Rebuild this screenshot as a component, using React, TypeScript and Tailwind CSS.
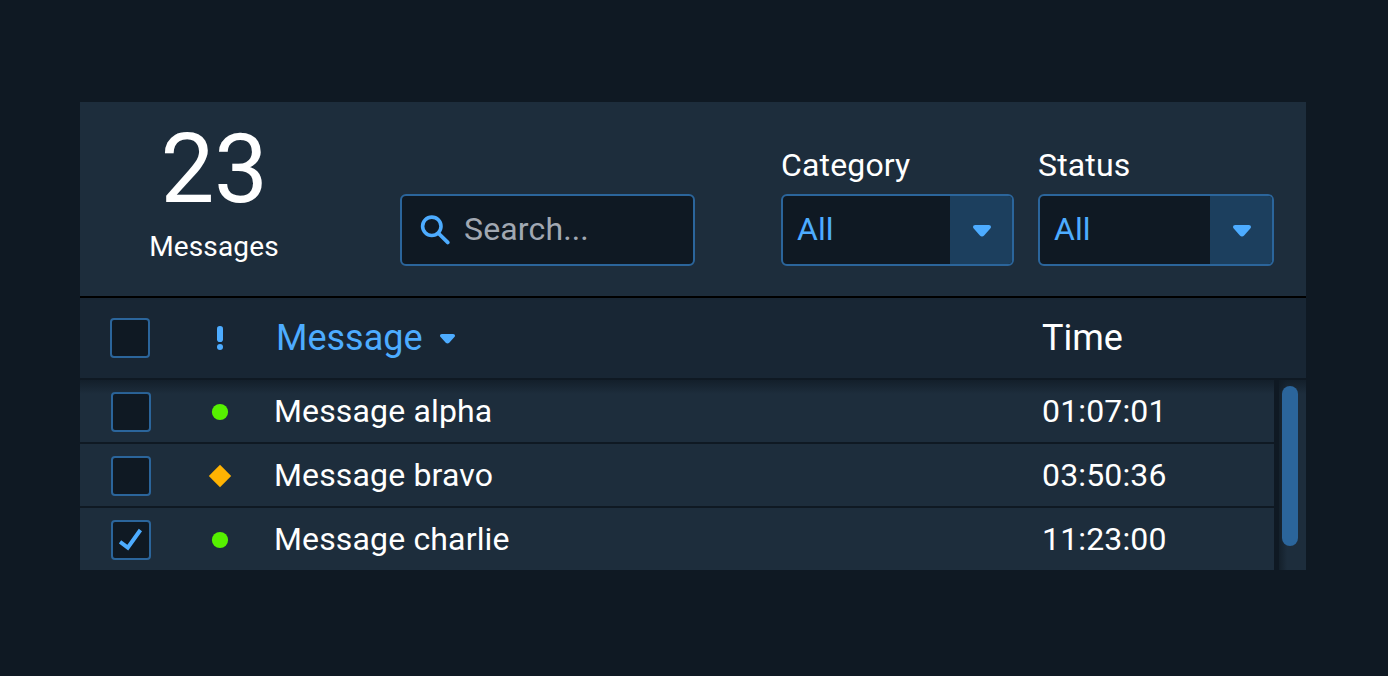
const messages = [
  { name: 'Message alpha', time: '01:07:01', status: 'normal', checked: false },
  { name: 'Message bravo', time: '03:50:36', status: 'caution', checked: false },
  { name: 'Message charlie', time: '11:23:00', status: 'normal', checked: true },
];

function Caret({ className }: { className: string }) {
  return (
    <svg viewBox="0 0 18 12" className={className} fill="#4dacff" aria-hidden="true">
      <path d="M2.2 0h13.6c2 0 2.9 2.2 1.5 3.6l-6.2 6.9c-1.2 1.3-3 1.3-4.2 0L.7 3.6C-.7 2.2.2 0 2.2 0Z" />
    </svg>
  );
}

function Checkbox({ checked }: { checked: boolean }) {
  return (
    <span className="flex h-10 w-10 shrink-0 items-center justify-center rounded-[4px] border-2 border-[#2b659b] bg-[#0f1923]">
      {checked && (
        <svg viewBox="0 0 24 24" className="h-6 w-6" fill="none" stroke="#4dacff" strokeWidth="4" aria-hidden="true">
          <path d="M1 13.8 8.8 19.6 21.4 2" />
        </svg>
      )}
    </span>
  );
}

function Status({ kind }: { kind: string }) {
  return (
    <svg viewBox="0 0 24 24" className="h-6 w-6 shrink-0" aria-hidden="true">
      {kind === 'caution' ? (
        <path d="M12 .8 23.2 12 12 23.2.8 12Z" fill="#ffb302" />
      ) : (
        <circle cx="12" cy="12" r="8.1" fill="#56f000" />
      )}
    </svg>
  );
}

function Filter({ label, className }: { label: string; className: string }) {
  return (
    <div className={className}>
      <div className="h-[50px] text-[32px] leading-[42px] tracking-[0.15px] text-white">{label}</div>
      <button className="flex h-[72px] w-full overflow-hidden rounded-md border-2 border-[#2b659b] bg-[#0f1923] text-left">
        <span className="flex-1 pl-[14px] text-[32px] leading-[66px] tracking-[0.1px] text-[#4dacff]">All</span>
        <span className="flex h-full w-[62px] items-center justify-center bg-[#1c3f5e] pt-[2px] pl-px">
          <Caret className="h-3 w-[18px]" />
        </span>
      </button>
    </div>
  );
}

export default function App() {
  return (
    <div className="h-[676px] w-[1388px] overflow-hidden bg-[#0f1923] pt-[102px] pl-20 font-['Roboto',sans-serif]">
      <main className="w-[1226px]">
        <header className="flex h-[196px] border-b-2 border-black bg-[#1d2d3c]">
          <div className="flex w-[268px] flex-col items-center text-white">
            <div className="mt-[11px] h-[112px] text-[96px] leading-[112px] tracking-[-0.4px]">23</div>
            <div className="mt-[3px] text-[28px] leading-[38px] tracking-[0.15px]">Messages</div>
          </div>
          <label className="mt-[92px] ml-[52px] flex h-[72px] w-[295px] items-center rounded-md border-2 border-[#2b659b] bg-[#0f1923]">
            <svg viewBox="0 0 30 30" className="ml-[18px] h-[30px] w-[30px]" fill="none" stroke="#4dacff" aria-hidden="true">
              <circle cx="11.8" cy="11.3" r="9.2" strokeWidth="3.6" />
              <path d="m18.7 18.5 9 8.9" strokeWidth="3.8" strokeLinecap="round" />
            </svg>
            <span className="-mt-[2px] ml-[14px] text-[32px] leading-10 tracking-[0.15px] text-[#a1a8b2]">Search...</span>
          </label>
          <Filter label="Category" className="mt-[42px] ml-[86px] w-[233px]" />
          <Filter label="Status" className="mt-[42px] ml-6 w-[236px]" />
        </header>

        <div className="flex h-[82px] items-center border-b-2 border-[#0f1923] bg-[#182634] pl-[30px] text-[36px]">
          <Checkbox checked={false} />
          <svg viewBox="0 0 6 24" className="ml-[67px] h-6 w-[6px]" fill="#4dacff" aria-hidden="true">
            <rect width="6" height="16" rx="2.8" />
            <circle cx="3" cy="21" r="3" />
          </svg>
          <div className="ml-[53px] flex w-[766px] items-center">
            <span className="text-[#4dacff]">Message</span>
            <Caret className="mt-px ml-[17.5px] h-[10px] w-[15px]" />
          </div>
          <span className="text-white">Time</span>
        </div>

        <div className="relative flex h-[190px] justify-between">
          <div className="flex w-[1194px] flex-col gap-[2px]">
            {messages.map((m) => (
              <div key={m.name} className="flex h-[62px] items-center bg-[#1d2d3c] pl-[31px] text-[32px] tracking-[0.15px] text-white">
                <span className="pt-[2px]">
                  <Checkbox checked={m.checked} />
                </span>
                <span className="ml-[57px] flex pt-[2px]">
                  <Status kind={m.status} />
                </span>
                <span className="ml-[42px] w-[768px]">{m.name}</span>
                <span>{m.time}</span>
              </div>
            ))}
          </div>
          <div className="flex w-[27px] bg-linear-to-r from-[#14202b] to-[#1d2d3c] to-30% pt-[6px] pl-[3px]">
            <div className="relative z-10 h-40 w-4 rounded-full bg-[#2b659b]" />
          </div>
          <div className="pointer-events-none absolute inset-x-0 top-0 h-[14px] bg-linear-to-b from-[#0f1923]/70 to-transparent" />
        </div>
      </main>
    </div>
  );
}
